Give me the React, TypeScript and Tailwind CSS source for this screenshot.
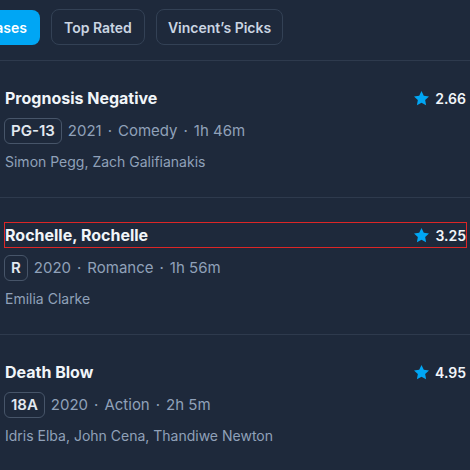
import React from "react";

const movies = [
  { title: "Prognosis Negative", rating: "PG-13", year: "2021", genre: "Comedy", time: "1h 46m", cast: "Simon Pegg, Zach Galifianakis", score: "2.66", focus: false },
  { title: "Rochelle, Rochelle", rating: "R", year: "2020", genre: "Romance", time: "1h 56m", cast: "Emilia Clarke", score: "3.25", focus: true },
  { title: "Death Blow", rating: "18A", year: "2020", genre: "Action", time: "2h 5m", cast: "Idris Elba, John Cena, Thandiwe Newton", score: "4.95", focus: false },
];

function Star() {
  return (
    <svg viewBox="0 0 20 20" className="w-[17px] h-[17px] text-sky-500" fill="currentColor">
      <path d="M10 1.2l2.7 5.6 6.1.8-4.5 4.3 1.1 6.1L10 15.1 4.6 18l1.1-6.1L1.2 7.6l6.1-.8z" />
    </svg>
  );
}

export default function App() {
  return (
    <div className="w-[470px] h-[470px] overflow-hidden bg-[#1e293b]" style={{ fontFamily: "Inter, 'Noto Sans', sans-serif" }}>
      <div className="flex items-center gap-[11px] pt-[9px] pb-[15px] border-b border-[#2e3a4d]">
        <div className="w-[40px] overflow-hidden flex justify-end shrink-0">
          <button className="shrink-0 h-[35px] px-[13px] rounded-lg bg-sky-500 text-white text-[14px] font-semibold whitespace-nowrap">New Releases</button>
        </div>
        <button className="shrink-0 h-[36px] px-[12px] rounded-lg border border-[#334155] text-slate-300 text-[14px] font-semibold whitespace-nowrap">Top Rated</button>
        <button className="shrink-0 h-[36px] px-[11px] rounded-lg border border-[#334155] text-slate-300 text-[14px] font-semibold whitespace-nowrap">Vincent’s Picks</button>
      </div>
      {movies.map((m) => (
        <div key={m.title} className="pl-[5px] pr-[4px] pt-[25px] pb-[23px] border-b border-[#2e3a4d]">
          <div className={"flex items-center justify-between h-[24px] " + (m.focus ? "outline outline-1 outline-[#dc2626]" : "")}>
            <span className="text-[16px] font-bold text-slate-100">{m.title}</span>
            <span className="flex items-center gap-[5px]">
              <Star />
              <span className="text-[14px] font-semibold text-slate-100">{m.score}</span>
            </span>
          </div>
          <div className="mt-[8px] flex items-center text-[15px] text-slate-400">
            <span className="h-[26px] px-[6px] -ml-[1px] flex items-center rounded-md border border-[#475569] text-slate-200 font-semibold">{m.rating}</span>
            <span className="ml-[6px]">{m.year}</span>
            <span className="mx-[6px]">·</span>
            <span>{m.genre}</span>
            <span className="mx-[6px]">·</span>
            <span>{m.time}</span>
          </div>
          <div className="mt-[6px] leading-6 text-[14px] text-slate-400">{m.cast}</div>
        </div>
      ))}
    </div>
  );
}
